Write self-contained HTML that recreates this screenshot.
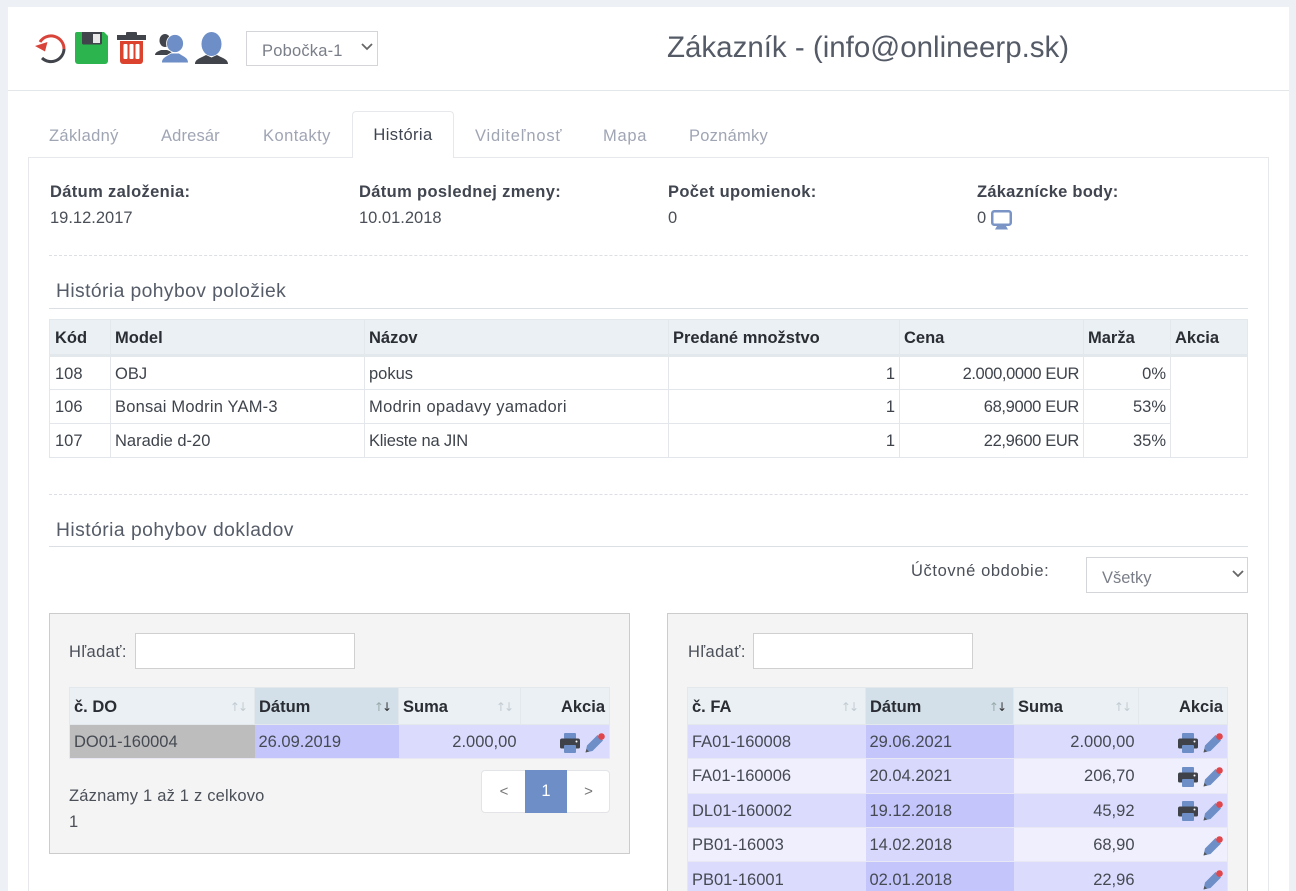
<!DOCTYPE html>
<html lang="sk">
<head>
<meta charset="utf-8">
<title>Zákazník</title>
<style>
html,body{margin:0;padding:0;width:1296px;height:891px;overflow:hidden;background:#edf1f6}
*{box-sizing:border-box}
body{font-family:"Liberation Sans",sans-serif;font-size:16.5px;color:#4a4f58;position:relative}
.a{position:absolute;white-space:nowrap}
#card{position:absolute;left:8px;top:7px;width:1281px;height:884px;background:#fff}
#hline{position:absolute;left:8px;top:90px;width:1281px;height:1px;background:#e4e7ea}
#pane{position:absolute;left:28px;top:157px;width:1241px;height:734px;border:1px solid #e6e8eb;border-bottom:0}
#tabact{position:absolute;left:352px;top:111px;width:102px;height:47px;background:#fff;border:1px solid #e6e8eb;border-bottom:0;border-radius:4px 4px 0 0;color:#3f4550;text-align:center;line-height:47px;letter-spacing:.4px}
.tab{color:#a0a5b4;top:125px;line-height:22px}
.b{font-weight:bold;color:#40454f;letter-spacing:.35px}
.dash{position:absolute;left:49px;width:1199px;height:0;border-top:1px dashed #dcdfe3}
.sec{left:56px;font-size:19.3px;color:#555c68;line-height:24px;letter-spacing:.42px}
.rule{position:absolute;left:49px;width:1199px;height:1px;background:#dcdfe3}
table{border-collapse:collapse;table-layout:fixed;position:absolute}
#t1{left:49px;top:319px;width:1198px}
#t1 th{height:36px;background:#eaf0f4;text-align:left;padding:2px 4px 0;color:#2a2d33;border:1px solid #e3e8ec;border-bottom:3px solid #e3e8ec;font-size:16.5px}
#t1 td{height:34px;padding:2px 4px 0;color:#3f444c;border:1px solid #e3e6ea;background:#fff}
#t1 th:first-child,#t1 td:first-child{padding-left:5px}
.r{text-align:right}
.panel{position:absolute;top:613px;width:581px;background:#f4f4f4;border:1px solid #cccccc}
.inp{position:absolute;background:#fff;border:1px solid #d0d0d0;height:36px;top:633px}
.dt th{height:37px;background:#eaf0f4;text-align:left;padding:2px 4px 0;color:#2a2d33;font-size:16.5px;border-right:1px solid #e3e8ec;border-bottom:1px solid #e3e8ec;border-top:1px solid #e3e8ec;position:relative}
.dt th.r{text-align:right}
.dt th.s{background:#d3e0e9}
.dt td{height:34.3px;padding:2px 4px 0;color:#454a52;border-bottom:1px solid #e8e8f4;white-space:nowrap}
.dt tr>*:first-child{border-left:1px solid #e3e8ec}
.dt tr>*:last-child{border-right:1px solid #e3e8ec}
.dt tr.o td{background:#dbdcfd}
.dt tr.e td{background:#efeffd}
.dt tr.o td.s{background:#c4c5fb}
.dt tr.e td.s{background:#d7d8fc}
.arr{position:absolute;right:8px;top:12px;font-family:"DejaVu Sans",sans-serif;font-size:12px;font-weight:normal;color:#c3ccd3;letter-spacing:-2px}
.arr.d{color:#9aa}
.arr.d i{font-style:normal;color:#333}
.ic{vertical-align:middle;display:inline-block}
.sel{position:absolute;background:#fff;border:1px solid #d3d5d8;color:#7a7e88}
.sel svg{position:absolute}
</style>
</head>
<body>
<svg width="0" height="0" style="position:absolute">
<defs>
<symbol id="pr" viewBox="0 0 20 20">
<rect x="4" y="0" width="12" height="6" rx="1" fill="#6d8ec6"/>
<path d="M2 5.500h16a2 2 0 0 1 2 2v6.500a1.500 1.500 0 0 1-1.500 1.500h-17A1.500 1.500 0 0 1 0 14V7.500a2 2 0 0 1 2-2z" fill="#3f4349"/>
<rect x="4" y="12" width="12" height="8" rx="1" fill="#6d8ec6"/>
<circle cx="16.500" cy="8.500" r="1" fill="#fff"/>
</symbol>
<symbol id="pe" viewBox="0 0 20 20">
<path d="M0.500 19.500l1.500-7L12.500 2l5.500 5.500L7.500 18z" fill="#6d8ec6"/>
<path d="M0.500 19.500l1-3.500 2.500 2.500z" fill="#555"/>
<circle cx="16.500" cy="3.500" r="3.300" fill="#e0474c"/>
</symbol>
</defs>
</svg>

<div id="card"></div>
<div id="hline"></div>

<!-- toolbar icons -->
<svg class="a" style="left:34px;top:32px" width="33" height="32" viewBox="0 0 33 32">
<path d="M6 10A13 13 0 0 1 30 17" fill="none" stroke="#d9443a" stroke-width="3"/>
<path d="M30 17A13 13 0 0 1 8 26" fill="none" stroke="#41444b" stroke-width="3"/>
<path d="M1 14l12.500-4-2.500 9.500z" fill="#d9443a"/>
</svg>
<svg class="a" style="left:75px;top:32px" width="33" height="32" viewBox="0 0 33 32">
<path d="M2 0h27l4 4v25a3 3 0 0 1-3 3H3a3 3 0 0 1-3-3V2a2 2 0 0 1 2-2z" fill="#2cb44f"/>
<path d="M7 0h20v11a1.500 1.500 0 0 1-1.500 1.500h-17A1.500 1.500 0 0 1 7 11z" fill="#42444b"/>
<rect x="18" y="2" width="7" height="9" fill="#e8e8e8"/>
</svg>
<svg class="a" style="left:117px;top:32px" width="30" height="32" viewBox="0 0 30 32">
<path d="M10 0h9a1 1 0 0 1 1 1v2h9v5H0V3h9V1a1 1 0 0 1 1-1z" fill="#41444b"/>
<path d="M3 9h23v20a3 3 0 0 1-3 3H6a3 3 0 0 1-3-3z" fill="#dc432f"/>
<rect x="6.500" y="12" width="4" height="15" rx="1" fill="#fff"/>
<rect x="12.500" y="12" width="4" height="15" rx="1" fill="#fff"/>
<rect x="18.500" y="12" width="4" height="15" rx="1" fill="#fff"/>
</svg>
<svg class="a" style="left:155px;top:33px" width="34" height="30" viewBox="0 0 34 30">
<ellipse cx="10" cy="7.500" rx="5.500" ry="6.500" fill="#41444b"/>
<path d="M0 22c0-3 4-4 6-5l6 0 5 2-5 3z" fill="#41444b"/>
<ellipse cx="20" cy="10.500" rx="8.500" ry="9" fill="#6d8ec6" stroke="#fff" stroke-width=".8"/>
<path d="M7 29.500c0-5 5-6 9-9h8c4 3 9 4 9 9z" fill="#6d8ec6"/>
</svg>
<svg class="a" style="left:195px;top:32px" width="34" height="32" viewBox="0 0 34 32">
<ellipse cx="16.500" cy="12" rx="10" ry="12" fill="#6d8ec6"/>
<path d="M0 32c0-5 6-6 11-9l5.500 2.500 5.500-2.500c5 3 11 4 11 9z" fill="#41444b"/>
</svg>

<div class="sel" style="left:246px;top:31px;width:132px;height:35px;line-height:38px;padding-left:15px;font-size:16.5px;letter-spacing:.2px">Pobočka-1
<svg style="right:4px;top:10px" width="12" height="10" viewBox="0 0 12 10"><path d="M1 2l5 5 5-5" fill="none" stroke="#666" stroke-width="1.800"/></svg></div>

<div class="a" id="title" style="left:667px;top:30px;font-size:29.500px;line-height:36px;color:#555b66">Zákazník - (info@onlineerp.sk)</div>

<!-- tabs -->
<div id="pane"></div>
<div id="tabact">História</div>
<div class="a tab" style="left:49px;letter-spacing:.35px">Základný</div>
<div class="a tab" style="left:161px;letter-spacing:.15px">Adresár</div>
<div class="a tab" style="left:263px;letter-spacing:.45px">Kontakty</div>
<div class="a tab" style="left:475px;letter-spacing:.8px">Viditeľnosť</div>
<div class="a tab" style="left:603px;letter-spacing:.7px">Mapa</div>
<div class="a tab" style="left:689px;letter-spacing:.25px">Poznámky</div>

<!-- info -->
<div class="a b" style="left:50px;top:181px;line-height:22px">Dátum založenia:</div>
<div class="a" style="left:50px;top:207px;line-height:22px">19.12.2017</div>
<div class="a b" style="left:359px;top:181px;line-height:22px">Dátum poslednej zmeny:</div>
<div class="a" style="left:359px;top:207px;line-height:22px">10.01.2018</div>
<div class="a b" style="left:668px;top:181px;line-height:22px">Počet upomienok:</div>
<div class="a" style="left:668px;top:207px;line-height:22px">0</div>
<div class="a b" style="left:977px;top:181px;line-height:22px;letter-spacing:.25px">Zákaznícke body:</div>
<div class="a" style="left:977px;top:207px;line-height:22px">0</div>
<svg class="a" style="left:991px;top:210px" width="21" height="20" viewBox="0 0 21 20">
<rect x="1.250" y="1.250" width="18.500" height="13.500" rx="2" fill="none" stroke="#7a94c6" stroke-width="2.500"/>
<path d="M6 16h9l2 3.500H4z" fill="#7a94c6"/>
</svg>

<div class="dash" style="top:255px"></div>
<div class="a sec" style="top:280px">História pohybov položiek</div>
<div class="rule" style="top:308px"></div>

<table id="t1">
<colgroup><col style="width:61px"><col style="width:254px"><col style="width:304px"><col style="width:231px"><col style="width:184px"><col style="width:87px"><col style="width:77px"></colgroup>
<tr><th>Kód</th><th>Model</th><th>Názov</th><th>Predané množstvo</th><th>Cena</th><th>Marža</th><th>Akcia</th></tr>
<tr><td>108</td><td>OBJ</td><td>pokus</td><td class="r">1</td><td class="r" style="letter-spacing:-.4px">2.000,0000 EUR</td><td class="r">0%</td><td rowspan="3"></td></tr>
<tr><td>106</td><td style="letter-spacing:.2px">Bonsai Modrin YAM-3</td><td style="letter-spacing:.35px">Modrin opadavy yamadori</td><td class="r">1</td><td class="r" style="letter-spacing:-.35px">68,9000 EUR</td><td class="r">53%</td></tr>
<tr><td>107</td><td>Naradie d-20</td><td style="letter-spacing:-.2px">Klieste na JIN</td><td class="r">1</td><td class="r" style="letter-spacing:-.35px">22,9600 EUR</td><td class="r">35%</td></tr>
</table>

<div class="dash" style="top:494px"></div>
<div class="a sec" style="top:519px;letter-spacing:.47px">História pohybov dokladov</div>
<div class="rule" style="top:546px"></div>

<div class="a" style="left:911px;top:560px;line-height:22px;letter-spacing:.62px">Účtovné obdobie:</div>
<div class="sel" style="left:1086px;top:557px;width:162px;height:36px;line-height:40px;padding-left:15px">Všetky
<svg style="right:3px;top:11px" width="12" height="10" viewBox="0 0 12 10"><path d="M1 2l5 5 5-5" fill="none" stroke="#666" stroke-width="1.800"/></svg></div>

<!-- left panel -->
<div class="panel" style="left:49px;height:241px"></div>
<div class="a" style="left:69px;top:641px;line-height:22px;letter-spacing:.4px">Hľadať:</div>
<div class="inp" style="left:135px;width:220px"></div>
<table class="dt" style="left:69px;top:687px;width:540px">
<colgroup><col style="width:185px"><col style="width:144px"><col style="width:122px"><col style="width:89px"></colgroup>
<tr><th>č. DO<span class="arr">↑↓</span></th><th class="s">Dátum<span class="arr d">↑<i>↓</i></span></th><th>Suma<span class="arr">↑↓</span></th><th class="r">Akcia</th></tr>
<tr class="o"><td style="background:#bdbdbd">DO01-160004</td><td class="s">26.09.2019</td><td class="r">2.000,00</td><td class="r"><svg class="ic" width="20" height="20"><use href="#pr"/></svg> <svg class="ic" width="20" height="20"><use href="#pe"/></svg></td></tr>
</table>
<div class="a" style="left:69px;top:785px;line-height:22px;letter-spacing:.2px">Záznamy 1 až 1 z celkovo</div>
<div class="a" style="left:69px;top:811px;line-height:22px">1</div>
<div class="a" style="left:481px;top:770px;width:129px;height:43px;background:#fff;border:1px solid #e2e4e7;border-radius:4px"></div>
<div class="a" style="left:525px;top:770px;width:42px;height:43px;background:#6d8ec6;color:#fff;text-align:center;line-height:43px">1</div>
<div class="a" style="left:481px;top:770px;width:46px;height:43px;color:#777;text-align:center;line-height:43px;font-size:15px">&lt;</div>
<div class="a" style="left:567px;top:770px;width:43px;height:43px;color:#777;text-align:center;line-height:43px;font-size:15px">&gt;</div>

<!-- right panel -->
<div class="panel" style="left:667px;height:278px;border-bottom:0"></div>
<div class="a" style="left:688px;top:641px;line-height:22px;letter-spacing:.4px">Hľadať:</div>
<div class="inp" style="left:753px;width:220px"></div>
<table class="dt" style="left:687px;top:687px;width:540px">
<colgroup><col style="width:178px"><col style="width:148px"><col style="width:125px"><col style="width:89px"></colgroup>
<tr><th>č. FA<span class="arr">↑↓</span></th><th class="s">Dátum<span class="arr d">↑<i>↓</i></span></th><th>Suma<span class="arr">↑↓</span></th><th class="r">Akcia</th></tr>
<tr class="o"><td>FA01-160008</td><td class="s">29.06.2021</td><td class="r">2.000,00</td><td class="r"><svg class="ic" width="20" height="20"><use href="#pr"/></svg> <svg class="ic" width="20" height="20"><use href="#pe"/></svg></td></tr>
<tr class="e"><td>FA01-160006</td><td class="s">20.04.2021</td><td class="r">206,70</td><td class="r"><svg class="ic" width="20" height="20"><use href="#pr"/></svg> <svg class="ic" width="20" height="20"><use href="#pe"/></svg></td></tr>
<tr class="o"><td>DL01-160002</td><td class="s">19.12.2018</td><td class="r">45,92</td><td class="r"><svg class="ic" width="20" height="20"><use href="#pr"/></svg> <svg class="ic" width="20" height="20"><use href="#pe"/></svg></td></tr>
<tr class="e"><td>PB01-16003</td><td class="s">14.02.2018</td><td class="r">68,90</td><td class="r"><svg class="ic" width="20" height="20"><use href="#pe"/></svg></td></tr>
<tr class="o"><td style="border-bottom:0">PB01-16001</td><td class="s" style="border-bottom:0">02.01.2018</td><td class="r" style="border-bottom:0">22,96</td><td class="r" style="border-bottom:0"><svg class="ic" width="20" height="20"><use href="#pe"/></svg></td></tr>
</table>
</body>
</html>
